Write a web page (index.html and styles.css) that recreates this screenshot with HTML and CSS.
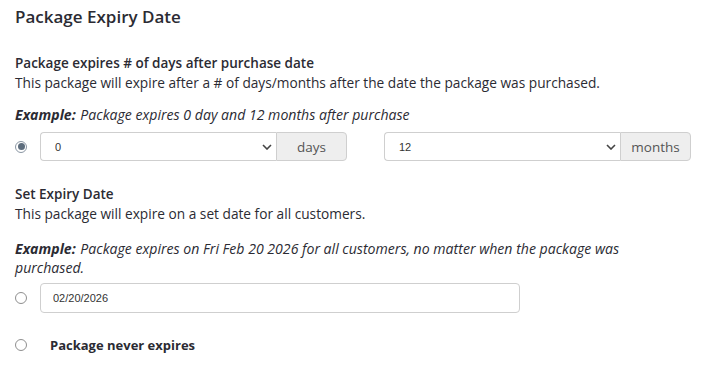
FILE: index.html
```html
<!DOCTYPE html>
<html>
<head>
<meta charset="utf-8">
<link rel="stylesheet" href="styles.css">
</head>
<body>
<div class="page">
  <h2 class="title">Package Expiry Date</h2>

  <section class="block">
    <h4 class="label">Package expires # of days after purchase date</h4>
    <p class="desc">This package will expire after a # of days/months after the date the package was purchased.</p>
    <p class="example"><b>Example:</b> Package expires 0 day and 12 months after purchase</p>
    <div class="row">
      <span class="radio checked"></span>
      <div class="groups">
        <div class="group">
          <div class="select-wrap">
            <select class="select"><option>0</option></select>
            <svg class="chev" width="10" height="6" viewBox="0 0 10 6"><path d="M1 1l4 4 4-4" fill="none" stroke="#444" stroke-width="1.6"/></svg>
          </div>
          <span class="addon">days</span>
        </div>
        <div class="group">
          <div class="select-wrap">
            <select class="select"><option>12</option></select>
            <svg class="chev" width="10" height="6" viewBox="0 0 10 6"><path d="M1 1l4 4 4-4" fill="none" stroke="#444" stroke-width="1.6"/></svg>
          </div>
          <span class="addon">months</span>
        </div>
      </div>
    </div>
  </section>

  <section class="block block2">
    <h4 class="label">Set Expiry Date</h4>
    <p class="desc">This package will expire on a set date for all customers.</p>
    <p class="example ex2"><b>Example:</b> Package expires on Fri Feb 20 2026 for all customers, no matter when the package was purchased.</p>
    <div class="row row2">
      <span class="radio"></span>
      <input class="date" type="text" value="02/20/2026">
    </div>
  </section>

  <div class="row row3">
    <span class="radio"></span>
    <span class="never">Package never expires</span>
  </div>
</div>
</body>
</html>
```

FILE: styles.css
```css
html, body { margin: 0; padding: 0; background: #fff; }
body {
  font-family: "Open Sans", "Liberation Sans", sans-serif;
  color: #2b2b33;
  font-size: 13px;
}
.page { padding: 5px 15px 0 15px; width: 680px; }
.title {
  margin: 0;
  font-size: 17px;
  font-weight: 600;
  line-height: 24px;
  color: #2b2b33;
}
.block { margin-top: 25px; }
.label {
  margin: 0;
  font-size: 13.5px;
  font-weight: 600;
  line-height: 19px;
}
.desc { margin: 0; line-height: 20px; font-size: 13.7px; }
.example {
  margin: 13px 0 0 0;
  font-style: italic;
  line-height: 18px;
  font-size: 14.1px;
}
.example b { font-weight: 700; display: inline-block; margin-right: 1px; }
.ex2 { width: 660px; margin-top: 15px; line-height: 19px; }
.row { display: flex; align-items: center; margin-top: 8px; }
.radio {
  width: 10px; height: 10px;
  border: 1px solid #8f8f8f;
  border-radius: 50%;
  flex: none;
  position: relative;
  margin-right: 13px;
  background: #fff;
}
.radio.checked { border-color: #8a96a3; }
.radio.checked::after {
  content: "";
  position: absolute;
  left: 1.5px; top: 1.5px;
  width: 7px; height: 7px;
  border-radius: 50%;
  background: #5d6d7d;
}
.groups { display: flex; gap: 37px; }
.group { display: flex; width: 307px; height: 29px; }
.select-wrap { position: relative; flex: 1; display: flex; }
.select {
  appearance: none;
  -webkit-appearance: none;
  flex: 1;
  height: 29px;
  border: 1px solid #cfcfcf;
  border-right: none;
  border-radius: 4px 0 0 4px;
  background: #fff;
  padding: 0 0 0 14px;
  font-family: "Liberation Sans", Arial, sans-serif;
  font-size: 11px;
  color: #333;
  margin: 0;
}
.chev { position: absolute; right: 4px; top: 12px; pointer-events: none; }
.addon {
  width: 71px;
  flex: none;
  box-sizing: border-box;
  border: 1px solid #cfcfcf;
  border-radius: 0 4px 4px 0;
  background: #eeeeee;
  color: #555;
  display: flex;
  align-items: center;
  justify-content: center;
  font-size: 13.5px;
}
.block2 { margin-top: 24px; }
.row2 { margin-top: 6px; }
.date {
  width: 480px;
  height: 30px;
  box-sizing: border-box;
  border: 1px solid #cfcfcf;
  border-radius: 4px;
  padding: 0 0 0 12px;
  font-family: "Liberation Sans", Arial, sans-serif;
  font-size: 11px;
  color: #333;
  margin: 0;
}
.row3 { margin-top: 23px; }
.never { font-weight: 700; margin-left: 10px; font-size: 13px; }
```
